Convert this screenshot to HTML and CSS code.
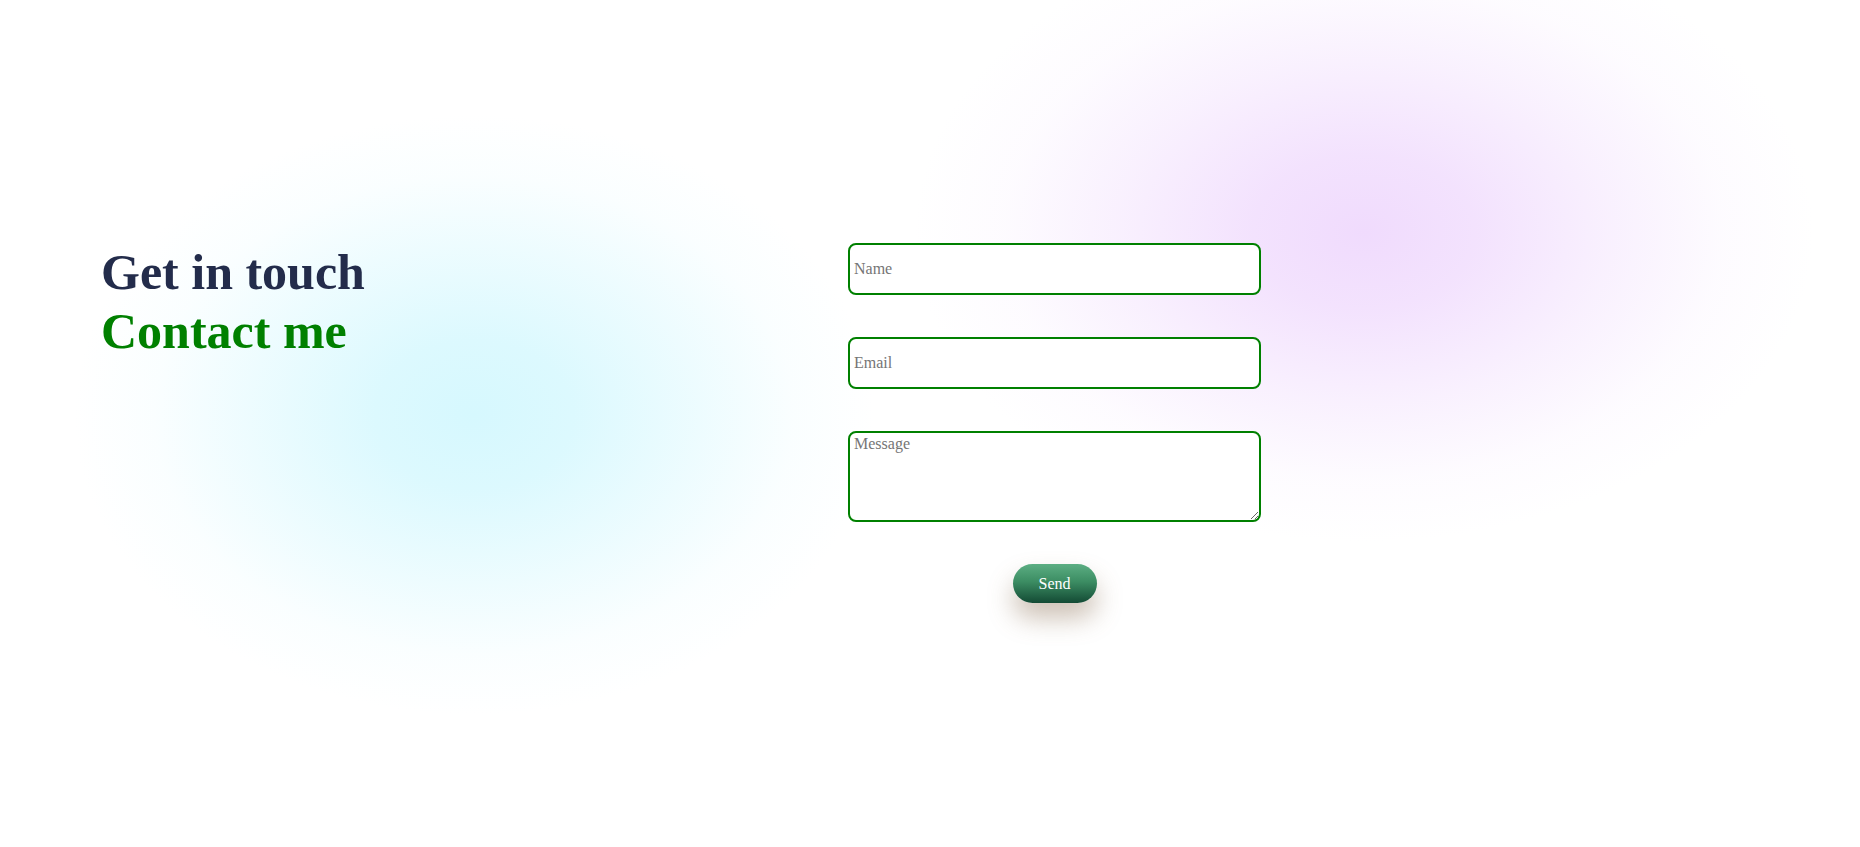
FILE: index.html
```html
<!DOCTYPE html>
<html lang="en">
<head>
<meta charset="utf-8">
<title>Contact</title>
<link rel="stylesheet" href="styles.css">
</head>
<body>
<main class="contact">
  <section class="intro">
    <h1 class="title">Get in touch</h1>
    <h2 class="subtitle">Contact me</h2>
  </section>
  <form class="form">
    <input class="field" type="text" placeholder="Name">
    <input class="field" type="email" placeholder="Email">
    <textarea class="field area" placeholder="Message"></textarea>
    <button class="send" type="button">Send</button>
  </form>
</main>
</body>
</html>
```
FILE: styles.css
```css
html, body {
  margin: 0;
  height: 100%;
}
body {
  font-family: "Liberation Serif", "Times New Roman", serif;
  background-color: #ffffff;
  background-image:
    radial-gradient(ellipse 400px 300px at 474px 415px,
      rgba(214, 248, 254, 1) 0%,
      rgba(214, 248, 254, 0.85) 25%,
      rgba(214, 248, 254, 0.45) 55%,
      rgba(214, 248, 254, 0.12) 80%,
      rgba(214, 248, 254, 0) 100%),
    radial-gradient(ellipse 450px 310px at 1364px 232px,
      rgba(240, 219, 253, 1) 0%,
      rgba(240, 219, 253, 0.8) 25%,
      rgba(240, 219, 253, 0.4) 55%,
      rgba(240, 219, 253, 0.1) 80%,
      rgba(240, 219, 253, 0) 100%);
  background-repeat: no-repeat;
  overflow: hidden;
}
.contact {
  display: flex;
  align-items: flex-start;
  padding: 243px 0 0 101px;
}
.intro {
  width: 747px;
}
.title, .subtitle {
  margin: 0;
  font-size: 50px;
  line-height: 59px;
  font-weight: bold;
}
.title {
  color: #232c4b;
}
.subtitle {
  color: #008000;
}
.form {
  width: 413px;
  display: flex;
  flex-direction: column;
  gap: 42px;
}
.field {
  box-sizing: border-box;
  width: 100%;
  height: 52px;
  margin: 0;
  border: 2px solid #008000;
  border-radius: 8px;
  padding: 0 4px;
  font-family: "Liberation Serif", "Times New Roman", serif;
  font-size: 16px;
  background: #ffffff;
  outline: none;
}
.field::placeholder {
  color: #757575;
}
.area {
  height: 91px;
  padding: 2px 4px;
  resize: vertical;
}
.send {
  align-self: center;
  width: 84px;
  height: 39px;
  border: none;
  border-radius: 20px;
  background: linear-gradient(to bottom, #5cae83 0%, #3c8d63 45%, #134a34 100%);
  color: #ffffff;
  font-family: "Liberation Serif", "Times New Roman", serif;
  font-size: 16px;
  box-shadow: 0 15px 26px rgba(130, 100, 70, 0.4);
  cursor: pointer;
}
```
